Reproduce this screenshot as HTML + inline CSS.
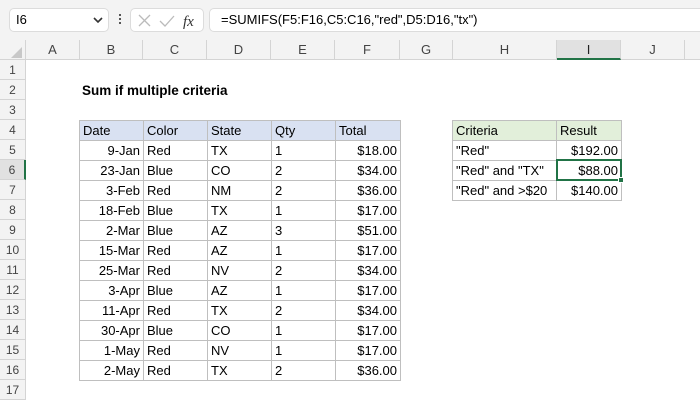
<!DOCTYPE html>
<html><head><style>
*{margin:0;padding:0;box-sizing:border-box}
body{width:700px;height:400px;overflow:hidden;background:#fff;font-family:"Liberation Sans",sans-serif;font-size:13px;color:#000;position:relative}
.a{position:absolute}
.tb{left:0;top:0;width:700px;height:40px;background:#f3f3f3}
.box{background:#fff;border:1px solid #dcdcdc;border-radius:5px;height:24px;top:8px}
.ch{top:40px;height:20px;background:#f3f3f3;border-right:1px solid #d4d4d4;border-bottom:1px solid #d4d4d4;text-align:center;line-height:19px;color:#444;font-size:13px}
.rh{left:0;width:26px;height:20px;background:#f3f3f3;border-bottom:1px solid #d4d4d4;border-right:1px solid #d4d4d4;text-align:center;line-height:20px;color:#444;font-size:12px}
table{border-collapse:collapse;table-layout:fixed}
tr{height:20px}
.c{height:20px;border:1px solid #bfbfbf;line-height:18px;padding:0 3px;white-space:nowrap;overflow:hidden}
.r{text-align:right}
.bh{background:#d9e1f2}
.gh{background:#e2efda}
</style></head><body>
<div class="a tb"></div>
<div class="a box" style="left:9px;width:100px;padding-left:6px;line-height:22px;font-size:13px">I6</div>
<svg class="a" style="left:92px;top:15px" width="12" height="10"><path d="M2 3 L6 7 L10 3" stroke="#333" stroke-width="1.6" fill="none"/></svg>
<div class="a" style="left:119px;top:14px;width:2px;height:2px;background:#555;box-shadow:0 4px 0 #555,0 8px 0 #555"></div>
<div class="a box" style="left:130px;width:74px"></div>
<svg class="a" style="left:136px;top:12px" width="62" height="18"><path d="M3 3 L14 14 M14 3 L3 14" stroke="#bbb" stroke-width="1.3"/><path d="M24 9 L29 14 L38 4" stroke="#bbb" stroke-width="1.3" fill="none"/><text x="47" y="14" font-family="Liberation Serif" font-style="italic" font-size="15" fill="#333">fx</text></svg>
<div class="a box" style="left:209px;width:500px;padding-left:11px;line-height:22px;font-size:13px">=SUMIFS(F5:F16,C5:C16,"red",D5:D16,"tx")</div>
<div class="a ch" style="left:0;width:26px"></div>
<svg class="a" style="left:10px;top:46px" width="13" height="13"><path d="M12 1 L12 12 L1 12 Z" fill="#c8c8c8"/></svg>
<div class="a ch" style="left:26px;width:54px">A</div>
<div class="a ch" style="left:80px;width:63px">B</div>
<div class="a ch" style="left:143px;width:64px">C</div>
<div class="a ch" style="left:207px;width:64px">D</div>
<div class="a ch" style="left:271px;width:64px">E</div>
<div class="a ch" style="left:335px;width:65px">F</div>
<div class="a ch" style="left:400px;width:53px">G</div>
<div class="a ch" style="left:453px;width:104px">H</div>
<div class="a ch" style="left:557px;width:64px;background:#e1e1e1;border-bottom:2px solid #217346;color:#222">I</div>
<div class="a ch" style="left:621px;width:64px">J</div>
<div class="a ch" style="left:685px;width:20px"></div>
<div class="a rh" style="top:60px">1</div><div class="a rh" style="top:80px">2</div><div class="a rh" style="top:100px">3</div><div class="a rh" style="top:120px">4</div><div class="a rh" style="top:140px">5</div><div class="a rh" style="top:160px;background:#e1e1e1;border-right:2px solid #217346">6</div><div class="a rh" style="top:180px">7</div><div class="a rh" style="top:200px">8</div><div class="a rh" style="top:220px">9</div><div class="a rh" style="top:240px">10</div><div class="a rh" style="top:260px">11</div><div class="a rh" style="top:280px">12</div><div class="a rh" style="top:300px">13</div><div class="a rh" style="top:320px">14</div><div class="a rh" style="top:340px">15</div><div class="a rh" style="top:360px">16</div><div class="a rh" style="top:380px">17</div>
<div class="a" style="left:82px;top:82px;font-weight:bold;font-size:13.5px;line-height:18px">Sum if multiple criteria</div>

<div class="a" style="left:79px;top:120px;width:322px">
<table style="width:321px">
<colgroup><col style="width:64px"><col style="width:64px"><col style="width:64px"><col style="width:64px"><col style="width:65px"></colgroup>
<tr class="bh"><td class="c">Date</td><td class="c">Color</td><td class="c">State</td><td class="c">Qty</td><td class="c">Total</td></tr>
<tr><td class="c r">9-Jan</td><td class="c">Red</td><td class="c">TX</td><td class="c">1</td><td class="c r">$18.00</td></tr>
<tr><td class="c r">23-Jan</td><td class="c">Blue</td><td class="c">CO</td><td class="c">2</td><td class="c r">$34.00</td></tr>
<tr><td class="c r">3-Feb</td><td class="c">Red</td><td class="c">NM</td><td class="c">2</td><td class="c r">$36.00</td></tr>
<tr><td class="c r">18-Feb</td><td class="c">Blue</td><td class="c">TX</td><td class="c">1</td><td class="c r">$17.00</td></tr>
<tr><td class="c r">2-Mar</td><td class="c">Blue</td><td class="c">AZ</td><td class="c">3</td><td class="c r">$51.00</td></tr>
<tr><td class="c r">15-Mar</td><td class="c">Red</td><td class="c">AZ</td><td class="c">1</td><td class="c r">$17.00</td></tr>
<tr><td class="c r">25-Mar</td><td class="c">Red</td><td class="c">NV</td><td class="c">2</td><td class="c r">$34.00</td></tr>
<tr><td class="c r">3-Apr</td><td class="c">Blue</td><td class="c">AZ</td><td class="c">1</td><td class="c r">$17.00</td></tr>
<tr><td class="c r">11-Apr</td><td class="c">Red</td><td class="c">TX</td><td class="c">2</td><td class="c r">$34.00</td></tr>
<tr><td class="c r">30-Apr</td><td class="c">Blue</td><td class="c">CO</td><td class="c">1</td><td class="c r">$17.00</td></tr>
<tr><td class="c r">1-May</td><td class="c">Red</td><td class="c">NV</td><td class="c">1</td><td class="c r">$17.00</td></tr>
<tr><td class="c r">2-May</td><td class="c">Red</td><td class="c">TX</td><td class="c">2</td><td class="c r">$36.00</td></tr>
</table></div>

<div class="a" style="left:452px;top:120px">
<table style="width:169px">
<colgroup><col style="width:104px"><col style="width:65px"></colgroup>
<tr class="gh"><td class="c">Criteria</td><td class="c">Result</td></tr>
<tr><td class="c">"Red"</td><td class="c r">$192.00</td></tr>
<tr><td class="c">"Red" and "TX"</td><td class="c r">$88.00</td></tr>
<tr><td class="c">"Red" and &gt;$20</td><td class="c r">$140.00</td></tr>
</table></div>
<div class="a" style="left:556px;top:159px;width:66px;height:22px;border:2px solid #217346"></div>
<div class="a" style="left:618px;top:177px;width:6px;height:6px;background:#217346;border:1px solid #fff"></div>
</body></html>
